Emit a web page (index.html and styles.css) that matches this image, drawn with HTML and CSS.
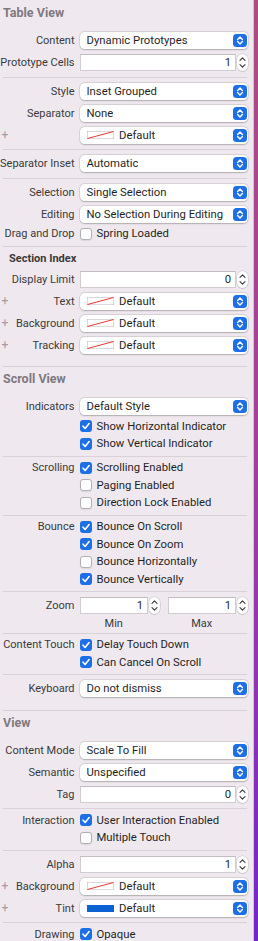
FILE: index.html
```html
<!DOCTYPE html>
<html lang="en">
<head>
<meta charset="utf-8">
<title>Attributes Inspector</title>
<link rel="stylesheet" href="styles.css">
</head>
<body>
<div class="window">
  <div class="panel">

    <section class="section first">
      <h2 class="section-title">Table View</h2>
      <div class="group">
        <div class="row"><span class="label">Content</span><div class="popup"><span class="value">Dynamic Prototypes</span><span class="arrows"><svg width="14" height="13" viewBox="0 0 14 13"><path d="M4.6 5.4 7 3 9.4 5.4M4.6 7.6 7 10 9.4 7.6" fill="none" stroke="#fff" stroke-width="1.4" stroke-linecap="round" stroke-linejoin="round"/></svg></span></div></div>
        <div class="row"><span class="label">Prototype Cells</span><div class="field">1</div><span class="stepper"><svg width="11" height="17" viewBox="0 0 11 17"><path d="M3 6.3 5.5 3.8 8 6.3M3 10.7 5.5 13.2 8 10.7" fill="none" stroke="#3a3a3a" stroke-width="1.1" stroke-linecap="round" stroke-linejoin="round"/></svg></span></div>
      </div>
      <hr class="sep">
      <div class="group">
        <div class="row"><span class="label">Style</span><div class="popup"><span class="value">Inset Grouped</span><span class="arrows"><svg width="14" height="13" viewBox="0 0 14 13"><path d="M4.6 5.4 7 3 9.4 5.4M4.6 7.6 7 10 9.4 7.6" fill="none" stroke="#fff" stroke-width="1.4" stroke-linecap="round" stroke-linejoin="round"/></svg></span></div></div>
        <div class="row"><span class="label">Separator</span><div class="popup"><span class="value">None</span><span class="arrows"><svg width="14" height="13" viewBox="0 0 14 13"><path d="M4.6 5.4 7 3 9.4 5.4M4.6 7.6 7 10 9.4 7.6" fill="none" stroke="#fff" stroke-width="1.4" stroke-linecap="round" stroke-linejoin="round"/></svg></span></div></div>
        <div class="row"><span class="label"><span class="plus">+</span></span><div class="popup"><span class="swatch"><svg width="27" height="8" viewBox="0 0 27 8"><rect x="0.25" y="0.25" width="26.5" height="7.5" fill="#fff" stroke="#b9b4b9" stroke-width="0.5"/><path d="M0.5 7.5 26.5 0.5" stroke="#e8372e" stroke-width="1"/></svg></span><span class="value">Default</span><span class="arrows"><svg width="14" height="13" viewBox="0 0 14 13"><path d="M4.6 5.4 7 3 9.4 5.4M4.6 7.6 7 10 9.4 7.6" fill="none" stroke="#fff" stroke-width="1.4" stroke-linecap="round" stroke-linejoin="round"/></svg></span></div></div>
      </div>
      <hr class="sep">
      <div class="group">
        <div class="row"><span class="label">Separator Inset</span><div class="popup"><span class="value">Automatic</span><span class="arrows"><svg width="14" height="13" viewBox="0 0 14 13"><path d="M4.6 5.4 7 3 9.4 5.4M4.6 7.6 7 10 9.4 7.6" fill="none" stroke="#fff" stroke-width="1.4" stroke-linecap="round" stroke-linejoin="round"/></svg></span></div></div>
      </div>
      <hr class="sep">
      <div class="group">
        <div class="row"><span class="label">Selection</span><div class="popup"><span class="value">Single Selection</span><span class="arrows"><svg width="14" height="13" viewBox="0 0 14 13"><path d="M4.6 5.4 7 3 9.4 5.4M4.6 7.6 7 10 9.4 7.6" fill="none" stroke="#fff" stroke-width="1.4" stroke-linecap="round" stroke-linejoin="round"/></svg></span></div></div>
        <div class="row"><span class="label">Editing</span><div class="popup"><span class="value">No Selection During Editing</span><span class="arrows"><svg width="14" height="13" viewBox="0 0 14 13"><path d="M4.6 5.4 7 3 9.4 5.4M4.6 7.6 7 10 9.4 7.6" fill="none" stroke="#fff" stroke-width="1.4" stroke-linecap="round" stroke-linejoin="round"/></svg></span></div></div>
        <div class="row check"><span class="label">Drag and Drop</span><span class="cb off"></span><span class="cb-text">Spring Loaded</span></div>
      </div>
      <hr class="sep">
      <div class="group end">
        <div class="subtitle">Section Index</div>
        <div class="row"><span class="label">Display Limit</span><div class="field">0</div><span class="stepper"><svg width="11" height="17" viewBox="0 0 11 17"><path d="M3 6.3 5.5 3.8 8 6.3M3 10.7 5.5 13.2 8 10.7" fill="none" stroke="#3a3a3a" stroke-width="1.1" stroke-linecap="round" stroke-linejoin="round"/></svg></span></div>
        <div class="row"><span class="label"><span class="plus">+</span>Text</span><div class="popup"><span class="swatch"><svg width="27" height="8" viewBox="0 0 27 8"><rect x="0.25" y="0.25" width="26.5" height="7.5" fill="#fff" stroke="#b9b4b9" stroke-width="0.5"/><path d="M0.5 7.5 26.5 0.5" stroke="#e8372e" stroke-width="1"/></svg></span><span class="value">Default</span><span class="arrows"><svg width="14" height="13" viewBox="0 0 14 13"><path d="M4.6 5.4 7 3 9.4 5.4M4.6 7.6 7 10 9.4 7.6" fill="none" stroke="#fff" stroke-width="1.4" stroke-linecap="round" stroke-linejoin="round"/></svg></span></div></div>
        <div class="row"><span class="label"><span class="plus">+</span>Background</span><div class="popup"><span class="swatch"><svg width="27" height="8" viewBox="0 0 27 8"><rect x="0.25" y="0.25" width="26.5" height="7.5" fill="#fff" stroke="#b9b4b9" stroke-width="0.5"/><path d="M0.5 7.5 26.5 0.5" stroke="#e8372e" stroke-width="1"/></svg></span><span class="value">Default</span><span class="arrows"><svg width="14" height="13" viewBox="0 0 14 13"><path d="M4.6 5.4 7 3 9.4 5.4M4.6 7.6 7 10 9.4 7.6" fill="none" stroke="#fff" stroke-width="1.4" stroke-linecap="round" stroke-linejoin="round"/></svg></span></div></div>
        <div class="row"><span class="label"><span class="plus">+</span>Tracking</span><div class="popup"><span class="swatch"><svg width="27" height="8" viewBox="0 0 27 8"><rect x="0.25" y="0.25" width="26.5" height="7.5" fill="#fff" stroke="#b9b4b9" stroke-width="0.5"/><path d="M0.5 7.5 26.5 0.5" stroke="#e8372e" stroke-width="1"/></svg></span><span class="value">Default</span><span class="arrows"><svg width="14" height="13" viewBox="0 0 14 13"><path d="M4.6 5.4 7 3 9.4 5.4M4.6 7.6 7 10 9.4 7.6" fill="none" stroke="#fff" stroke-width="1.4" stroke-linecap="round" stroke-linejoin="round"/></svg></span></div></div>
      </div>
      <hr class="sep">
    </section>

    <section class="section">
      <h2 class="section-title">Scroll View</h2>
      <div class="group">
        <div class="row"><span class="label">Indicators</span><div class="popup"><span class="value">Default Style</span><span class="arrows"><svg width="14" height="13" viewBox="0 0 14 13"><path d="M4.6 5.4 7 3 9.4 5.4M4.6 7.6 7 10 9.4 7.6" fill="none" stroke="#fff" stroke-width="1.4" stroke-linecap="round" stroke-linejoin="round"/></svg></span></div></div>
        <div class="row check"><span class="label"></span><span class="cb on"><svg width="12" height="12" viewBox="0 0 12 12"><path d="M3 6.2 5.1 8.4 9.1 3.5" fill="none" stroke="#fff" stroke-width="1.6" stroke-linecap="round" stroke-linejoin="round"/></svg></span><span class="cb-text">Show Horizontal Indicator</span></div>
        <div class="row check"><span class="label"></span><span class="cb on"><svg width="12" height="12" viewBox="0 0 12 12"><path d="M3 6.2 5.1 8.4 9.1 3.5" fill="none" stroke="#fff" stroke-width="1.6" stroke-linecap="round" stroke-linejoin="round"/></svg></span><span class="cb-text">Show Vertical Indicator</span></div>
      </div>
      <hr class="sep">
      <div class="group">
        <div class="row check"><span class="label">Scrolling</span><span class="cb on"><svg width="12" height="12" viewBox="0 0 12 12"><path d="M3 6.2 5.1 8.4 9.1 3.5" fill="none" stroke="#fff" stroke-width="1.6" stroke-linecap="round" stroke-linejoin="round"/></svg></span><span class="cb-text">Scrolling Enabled</span></div>
        <div class="row check"><span class="label"></span><span class="cb off"></span><span class="cb-text">Paging Enabled</span></div>
        <div class="row check"><span class="label"></span><span class="cb off"></span><span class="cb-text">Direction Lock Enabled</span></div>
      </div>
      <hr class="sep">
      <div class="group">
        <div class="row check"><span class="label">Bounce</span><span class="cb on"><svg width="12" height="12" viewBox="0 0 12 12"><path d="M3 6.2 5.1 8.4 9.1 3.5" fill="none" stroke="#fff" stroke-width="1.6" stroke-linecap="round" stroke-linejoin="round"/></svg></span><span class="cb-text">Bounce On Scroll</span></div>
        <div class="row check"><span class="label"></span><span class="cb on"><svg width="12" height="12" viewBox="0 0 12 12"><path d="M3 6.2 5.1 8.4 9.1 3.5" fill="none" stroke="#fff" stroke-width="1.6" stroke-linecap="round" stroke-linejoin="round"/></svg></span><span class="cb-text">Bounce On Zoom</span></div>
        <div class="row check"><span class="label"></span><span class="cb off"></span><span class="cb-text">Bounce Horizontally</span></div>
        <div class="row check"><span class="label"></span><span class="cb on"><svg width="12" height="12" viewBox="0 0 12 12"><path d="M3 6.2 5.1 8.4 9.1 3.5" fill="none" stroke="#fff" stroke-width="1.6" stroke-linecap="round" stroke-linejoin="round"/></svg></span><span class="cb-text">Bounce Vertically</span></div>
      </div>
      <hr class="sep">
      <div class="group">
        <div class="row zoom">
          <span class="label">Zoom</span>
          <div class="pair">
            <div class="col">
              <div class="stepfield"><div class="field">1</div><span class="stepper"><svg width="11" height="17" viewBox="0 0 11 17"><path d="M3 6.3 5.5 3.8 8 6.3M3 10.7 5.5 13.2 8 10.7" fill="none" stroke="#3a3a3a" stroke-width="1.1" stroke-linecap="round" stroke-linejoin="round"/></svg></span></div>
              <div class="caption">Min</div>
            </div>
            <div class="col">
              <div class="stepfield"><div class="field">1</div><span class="stepper"><svg width="11" height="17" viewBox="0 0 11 17"><path d="M3 6.3 5.5 3.8 8 6.3M3 10.7 5.5 13.2 8 10.7" fill="none" stroke="#3a3a3a" stroke-width="1.1" stroke-linecap="round" stroke-linejoin="round"/></svg></span></div>
              <div class="caption">Max</div>
            </div>
          </div>
        </div>
      </div>
      <hr class="sep">
      <div class="group">
        <div class="row check"><span class="label">Content Touch</span><span class="cb on"><svg width="12" height="12" viewBox="0 0 12 12"><path d="M3 6.2 5.1 8.4 9.1 3.5" fill="none" stroke="#fff" stroke-width="1.6" stroke-linecap="round" stroke-linejoin="round"/></svg></span><span class="cb-text">Delay Touch Down</span></div>
        <div class="row check"><span class="label"></span><span class="cb on"><svg width="12" height="12" viewBox="0 0 12 12"><path d="M3 6.2 5.1 8.4 9.1 3.5" fill="none" stroke="#fff" stroke-width="1.6" stroke-linecap="round" stroke-linejoin="round"/></svg></span><span class="cb-text">Can Cancel On Scroll</span></div>
      </div>
      <hr class="sep">
      <div class="group end">
        <div class="row"><span class="label">Keyboard</span><div class="popup"><span class="value">Do not dismiss</span><span class="arrows"><svg width="14" height="13" viewBox="0 0 14 13"><path d="M4.6 5.4 7 3 9.4 5.4M4.6 7.6 7 10 9.4 7.6" fill="none" stroke="#fff" stroke-width="1.4" stroke-linecap="round" stroke-linejoin="round"/></svg></span></div></div>
      </div>
      <hr class="sep">
    </section>

    <section class="section">
      <h2 class="section-title">View</h2>
      <div class="group">
        <div class="row"><span class="label">Content Mode</span><div class="popup"><span class="value">Scale To Fill</span><span class="arrows"><svg width="14" height="13" viewBox="0 0 14 13"><path d="M4.6 5.4 7 3 9.4 5.4M4.6 7.6 7 10 9.4 7.6" fill="none" stroke="#fff" stroke-width="1.4" stroke-linecap="round" stroke-linejoin="round"/></svg></span></div></div>
        <div class="row"><span class="label">Semantic</span><div class="popup"><span class="value">Unspecified</span><span class="arrows"><svg width="14" height="13" viewBox="0 0 14 13"><path d="M4.6 5.4 7 3 9.4 5.4M4.6 7.6 7 10 9.4 7.6" fill="none" stroke="#fff" stroke-width="1.4" stroke-linecap="round" stroke-linejoin="round"/></svg></span></div></div>
        <div class="row"><span class="label">Tag</span><div class="field">0</div><span class="stepper"><svg width="11" height="17" viewBox="0 0 11 17"><path d="M3 6.3 5.5 3.8 8 6.3M3 10.7 5.5 13.2 8 10.7" fill="none" stroke="#3a3a3a" stroke-width="1.1" stroke-linecap="round" stroke-linejoin="round"/></svg></span></div>
      </div>
      <hr class="sep">
      <div class="group">
        <div class="row check"><span class="label">Interaction</span><span class="cb on"><svg width="12" height="12" viewBox="0 0 12 12"><path d="M3 6.2 5.1 8.4 9.1 3.5" fill="none" stroke="#fff" stroke-width="1.6" stroke-linecap="round" stroke-linejoin="round"/></svg></span><span class="cb-text">User Interaction Enabled</span></div>
        <div class="row check"><span class="label"></span><span class="cb off"></span><span class="cb-text">Multiple Touch</span></div>
      </div>
      <hr class="sep">
      <div class="group">
        <div class="row"><span class="label">Alpha</span><div class="field">1</div><span class="stepper"><svg width="11" height="17" viewBox="0 0 11 17"><path d="M3 6.3 5.5 3.8 8 6.3M3 10.7 5.5 13.2 8 10.7" fill="none" stroke="#3a3a3a" stroke-width="1.1" stroke-linecap="round" stroke-linejoin="round"/></svg></span></div>
        <div class="row"><span class="label"><span class="plus">+</span>Background</span><div class="popup"><span class="swatch"><svg width="27" height="8" viewBox="0 0 27 8"><rect x="0.25" y="0.25" width="26.5" height="7.5" fill="#fff" stroke="#b9b4b9" stroke-width="0.5"/><path d="M0.5 7.5 26.5 0.5" stroke="#e8372e" stroke-width="1"/></svg></span><span class="value">Default</span><span class="arrows"><svg width="14" height="13" viewBox="0 0 14 13"><path d="M4.6 5.4 7 3 9.4 5.4M4.6 7.6 7 10 9.4 7.6" fill="none" stroke="#fff" stroke-width="1.4" stroke-linecap="round" stroke-linejoin="round"/></svg></span></div></div>
        <div class="row"><span class="label"><span class="plus">+</span>Tint</span><div class="popup"><span class="swatch tint"></span><span class="value">Default</span><span class="arrows"><svg width="14" height="13" viewBox="0 0 14 13"><path d="M4.6 5.4 7 3 9.4 5.4M4.6 7.6 7 10 9.4 7.6" fill="none" stroke="#fff" stroke-width="1.4" stroke-linecap="round" stroke-linejoin="round"/></svg></span></div></div>
      </div>
      <hr class="sep">
      <div class="group">
        <div class="row check"><span class="label">Drawing</span><span class="cb on"><svg width="12" height="12" viewBox="0 0 12 12"><path d="M3 6.2 5.1 8.4 9.1 3.5" fill="none" stroke="#fff" stroke-width="1.6" stroke-linecap="round" stroke-linejoin="round"/></svg></span><span class="cb-text">Opaque</span></div>
      </div>
    </section>

  </div>
  <div class="edge"></div>
</div>
</body>
</html>
```

FILE: styles.css
```css
html, body {
  margin: 0;
  padding: 0;
}

body {
  background: #efe9ef;
  font-family: Roboto, "Liberation Sans", sans-serif;
  font-size: 11px;
  color: #2a2a2a;
  overflow: hidden;
}

.window {
  display: flex;
  height: 941px;
}

.panel {
  width: 254px;
  flex: none;
  box-sizing: border-box;
  border-right: 1px solid #d3c3cf;
  background: #efe9ef;
}

.edge {
  flex: 1;
  background: linear-gradient(to bottom, #ad4c80 0%, #a4409a 45%, #8e33b4 75%, #7026c8 100%);
}

.section-title {
  margin: 0;
  height: 26px;
  box-sizing: border-box;
  padding: 5px 0 0 3px;
  font-size: 12.5px;
  line-height: 14px;
  font-weight: 700;
  color: #7e797e;
}

.first .section-title {
  height: 27px;
  padding-top: 6px;
}

.group {
  padding: 2.5px 5px 3px 0;
}

.group.end {
  padding-bottom: 10px;
}

.sep {
  border: 0;
  height: 1px;
  margin: 0 6px 0 3px;
  background: #d8d1d8;
}

.subtitle {
  height: 19px;
  line-height: 19px;
  padding-left: 9px;
  font-weight: 700;
  color: #3a3a3a;
}

.row {
  display: flex;
  align-items: center;
  height: 22px;
}

.row.check {
  height: 17.5px;
}

.label {
  width: 75px;
  flex: none;
  margin-right: 5px;
  display: flex;
  justify-content: flex-end;
  align-items: center;
  color: #3a3a3a;
  white-space: nowrap;
  box-sizing: border-box;
  padding-right: 0.5px;
}

.plus {
  margin-right: auto;
  padding-left: 1.5px;
  color: #a29ca2;
  font-size: 12px;
}

.popup {
  flex: 1;
  min-width: 0;
  height: 17px;
  display: flex;
  align-items: center;
  background: #fff;
  border-radius: 4.5px;
  box-shadow: 0 0 0 0.5px rgba(0, 0, 0, 0.12), 0 0.5px 1.5px rgba(0, 0, 0, 0.22);
  padding-left: 6.5px;
  box-sizing: border-box;
}

.value {
  color: #1f1f1f;
  font-size: 11.3px;
  white-space: nowrap;
  overflow: hidden;
}

.arrows {
  margin-left: auto;
  margin-right: 1.5px;
  flex: none;
  width: 14px;
  height: 13px;
  border-radius: 3.5px;
  background: #1d6fe7;
  display: flex;
}

.swatch {
  flex: none;
  width: 27px;
  height: 8px;
  margin-right: 5.5px;
  display: flex;
}

.swatch.tint {
  height: 7px;
  background: #0b63d3;
}

.field {
  flex: 1;
  min-width: 0;
  height: 17px;
  box-sizing: border-box;
  background: #fff;
  border: 1px solid #d2ccd2;
  border-top-color: #c2bcc2;
  text-align: right;
  padding-right: 3.5px;
  line-height: 15px;
  color: #1f1f1f;
  font-size: 11.3px;
}

.stepper {
  flex: none;
  width: 11px;
  height: 17px;
  margin-left: 1.5px;
  border-radius: 5.5px;
  background: #fff;
  box-shadow: 0 0 0 0.5px rgba(0, 0, 0, 0.14), 0 0.5px 1px rgba(0, 0, 0, 0.2);
  display: flex;
}

.cb {
  flex: none;
  width: 12px;
  height: 12px;
  border-radius: 3px;
  box-sizing: border-box;
  margin-right: 4.5px;
  display: flex;
}

.cb.on {
  background: #1d6fe7;
}

.cb.off {
  background: #fff;
  border: 0.5px solid #b5afb5;
  box-shadow: 0 0.5px 1px rgba(0, 0, 0, 0.08);
}

.cb-text {
  color: #1f1f1f;
  font-size: 11.3px;
  white-space: nowrap;
}

.row.zoom {
  height: auto;
  align-items: flex-start;
}

.row.zoom .label {
  height: 22px;
}

.pair {
  flex: 1;
  display: grid;
  grid-template-columns: 1fr 1fr;
  column-gap: 8px;
}

.stepfield {
  height: 22px;
  display: flex;
  align-items: center;
}

.caption {
  line-height: 13px;
  padding-right: 12.5px;
  text-align: center;
  color: #3a3a3a;
}
```
